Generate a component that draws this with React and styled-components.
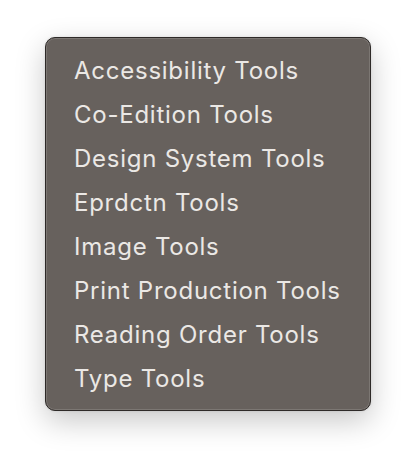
import React from "react"
import styled, { createGlobalStyle } from "styled-components"

const GlobalStyle = createGlobalStyle`
  html, body {
    margin: 0;
    padding: 0;
    background: #ffffff;
  }
`

const Page = styled.div`
  width: 416px;
  height: 464px;
  padding: 37px 0 0 45px;
  box-sizing: border-box;
`

const Menu = styled.ul`
  width: 326px;
  height: 374px;
  box-sizing: border-box;
  margin: 0;
  padding: 10px 0 0;
  list-style: none;
  background: #67615d;
  border: 1px solid #2e2a28;
  border-radius: 10px;
  box-shadow: inset 0 0 0 1px rgba(255, 255, 255, 0.14),
    0 10px 30px rgba(0, 0, 0, 0.22), 0 0 3px rgba(0, 0, 0, 0.1);
  font-family: Inter, "Noto Sans", sans-serif;
`

const MenuItem = styled.li`
  height: 44px;
  display: flex;
  align-items: center;
  padding-left: 28px;
  font-size: 24px;
  color: #ebe8e5;
  letter-spacing: 0.75px;
`

const tools = [
  "Accessibility Tools",
  "Co-Edition Tools",
  "Design System Tools",
  "Eprdctn Tools",
  "Image Tools",
  "Print Production Tools",
  "Reading Order Tools",
  "Type Tools",
]

const App = () => (
  <>
    <GlobalStyle />
    <Page>
      <Menu>
        {tools.map(t => (
          <MenuItem key={t}>{t}</MenuItem>
        ))}
      </Menu>
    </Page>
  </>
)

export default App
